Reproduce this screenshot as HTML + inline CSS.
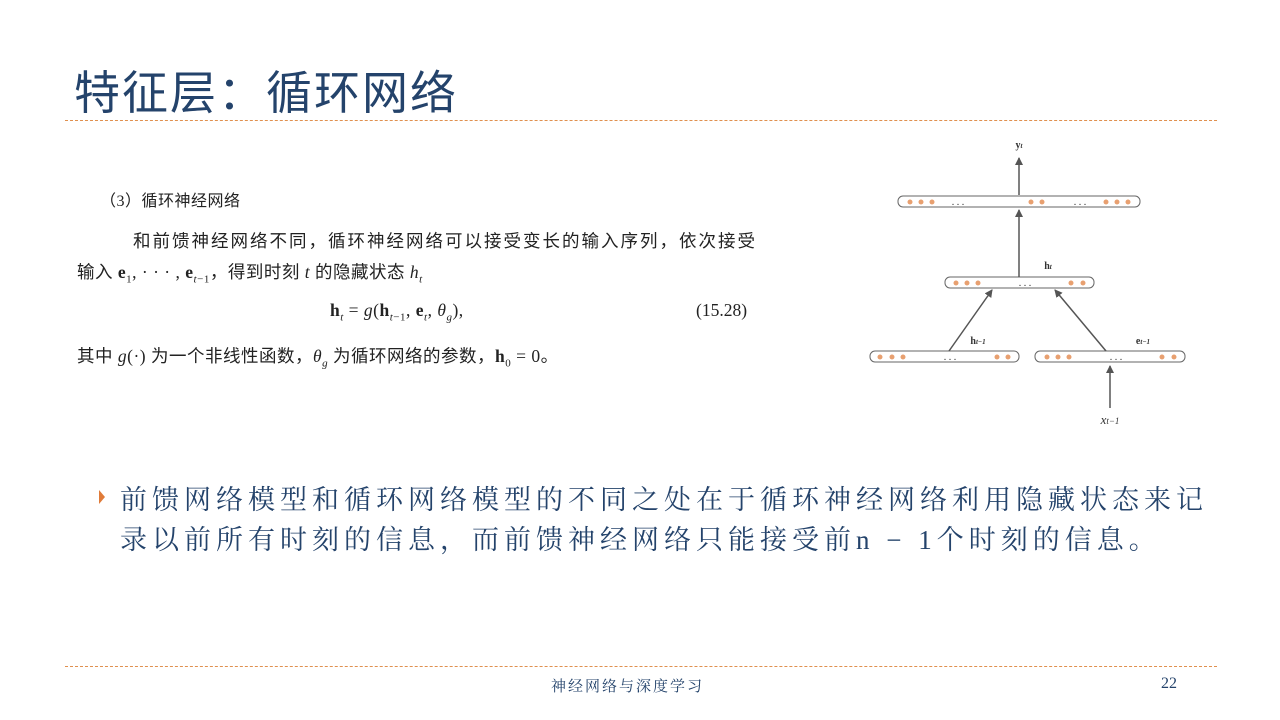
<!DOCTYPE html>
<html><head><meta charset="utf-8"><style>
body{margin:0;width:1280px;height:720px;background:#fff;position:relative;overflow:hidden;font-family:"Liberation Serif","Noto Serif CJK SC",serif;}
.a{position:absolute;white-space:nowrap;}
.title{left:74px;top:57px;font-size:46px;color:#24436b;font-family:"Liberation Sans","Noto Sans CJK SC",sans-serif;letter-spacing:2px;}
.dash{position:absolute;left:65px;width:1152px;height:0;border-top:1.5px dashed #e0904f;}
.p{font-size:17.5px;color:#222;letter-spacing:2.0px;font-family:"Liberation Serif","Noto Sans CJK SC",serif;}
.b{font-size:27px;color:#24436b;letter-spacing:5px;font-family:"Liberation Serif","Noto Serif CJK SC",serif;}
i{font-style:italic}
</style></head><body>
<div class="a title">特征层：循环网络</div>
<div class="dash" style="top:120px"></div>
<div class="dash" style="top:666px"></div>
<div class="a p" style="left:100px;top:187px;font-size:16px;letter-spacing:0.5px">（3）循环神经网络</div>
<div class="a p" style="left:133px;top:228px">和前馈神经网络不同，循环神经网络可以接受变长的输入序列，依次接受</div>
<div class="a p" style="left:77px;top:259px;letter-spacing:0.5px">输入 <b>e</b><sub style="font-size:11px">1</sub>, · · · , <b>e</b><sub style="font-size:11px"><i>t</i>−1</sub>，得到时刻 <i>t</i> 的隐藏状态 <i>h<sub style="font-size:11px">t</sub></i></div>
<div class="a p" style="left:330px;top:300px;letter-spacing:0.5px"><b>h</b><sub style="font-size:11px"><i>t</i></sub> = <i>g</i>(<b>h</b><sub style="font-size:11px"><i>t</i>−1</sub>, <b>e</b><sub style="font-size:11px"><i>t</i></sub>, <i>θ</i><sub style="font-size:11px"><i>g</i></sub>),</div>
<div class="a p" style="left:696px;top:300px;letter-spacing:0">(15.28)</div>
<div class="a p" style="left:77px;top:343px;letter-spacing:0.5px">其中 <i>g</i>(·) 为一个非线性函数，<i>θ<sub style="font-size:11px">g</sub></i> 为循环网络的参数，<b>h</b><sub style="font-size:11px">0</sub> = 0。</div>
<svg class="a" style="left:0;top:0" width="1280" height="720">
<defs><marker id="m" markerWidth="8" markerHeight="8" refX="7" refY="4" orient="auto" markerUnits="userSpaceOnUse"><path d="M0,0 L8,4 L0,8 z" fill="#555"/></marker></defs>
<g fill="#fff" stroke="#666" stroke-width="1">
<rect x="898" y="196" width="242" height="11" rx="5"/>
<rect x="945" y="277" width="149" height="11" rx="5"/>
<rect x="870" y="351" width="149" height="11" rx="5"/>
<rect x="1035" y="351" width="150" height="11" rx="5"/>
</g>
<g fill="#e8a070">
<circle cx="910" cy="202" r="2.5"/><circle cx="921" cy="202" r="2.5"/><circle cx="932" cy="202" r="2.5"/>
<circle cx="1031" cy="202" r="2.5"/><circle cx="1042" cy="202" r="2.5"/>
<circle cx="1106" cy="202" r="2.5"/><circle cx="1117" cy="202" r="2.5"/><circle cx="1128" cy="202" r="2.5"/>
<circle cx="956" cy="283" r="2.5"/><circle cx="967" cy="283" r="2.5"/><circle cx="978" cy="283" r="2.5"/>
<circle cx="1071" cy="283" r="2.5"/><circle cx="1083" cy="283" r="2.5"/>
<circle cx="880" cy="357" r="2.5"/><circle cx="892" cy="357" r="2.5"/><circle cx="903" cy="357" r="2.5"/>
<circle cx="997" cy="357" r="2.5"/><circle cx="1008" cy="357" r="2.5"/>
<circle cx="1047" cy="357" r="2.5"/><circle cx="1058" cy="357" r="2.5"/><circle cx="1069" cy="357" r="2.5"/>
<circle cx="1162" cy="357" r="2.5"/><circle cx="1174" cy="357" r="2.5"/>
</g>
<g font-size="10" fill="#333" text-anchor="middle">
<text x="958" y="205">. . .</text><text x="1080" y="205">. . .</text>
<text x="1025" y="286">. . .</text><text x="950" y="360">. . .</text><text x="1116" y="360">. . .</text>
<text x="1019" y="148" font-weight="bold">y<tspan font-size="7" font-style="italic">t</tspan></text>
<text x="1048" y="269" font-weight="bold">h<tspan font-size="7" font-style="italic">t</tspan></text>
<text x="978" y="344" font-weight="bold">h<tspan font-size="7" font-style="italic">t−1</tspan></text>
<text x="1143" y="344" font-weight="bold">e<tspan font-size="7" font-style="italic">t−1</tspan></text>
<text x="1110" y="424" font-size="13" font-style="italic">x<tspan font-size="9">t−1</tspan></text>
</g>
<g stroke="#555" stroke-width="1.5" marker-end="url(#m)">
<line x1="1019" y1="195" x2="1019" y2="158"/>
<line x1="1019" y1="277" x2="1019" y2="210"/>
<line x1="949" y1="351" x2="992" y2="290"/>
<line x1="1106" y1="351" x2="1055" y2="290"/>
<line x1="1110" y1="408" x2="1110" y2="366"/>
</g>
<path d="M99,490 L105,497 L99,504 z" fill="#e07b39"/>
</svg>
<div class="a b" style="left:120px;top:478px">前馈网络模型和循环网络模型的不同之处在于循环神经网络利用隐藏状态来记</div>
<div class="a b" style="left:120px;top:518px">录以前所有时刻的信息，而前馈神经网络只能接受前n − 1个时刻的信息。</div>
<div class="a" style="left:551px;top:675px;font-size:15px;color:#24436b;letter-spacing:2px">神经网络与深度学习</div>
<div class="a" style="left:1161px;top:675px;font-size:16px;color:#24436b">22</div>
</body></html>
